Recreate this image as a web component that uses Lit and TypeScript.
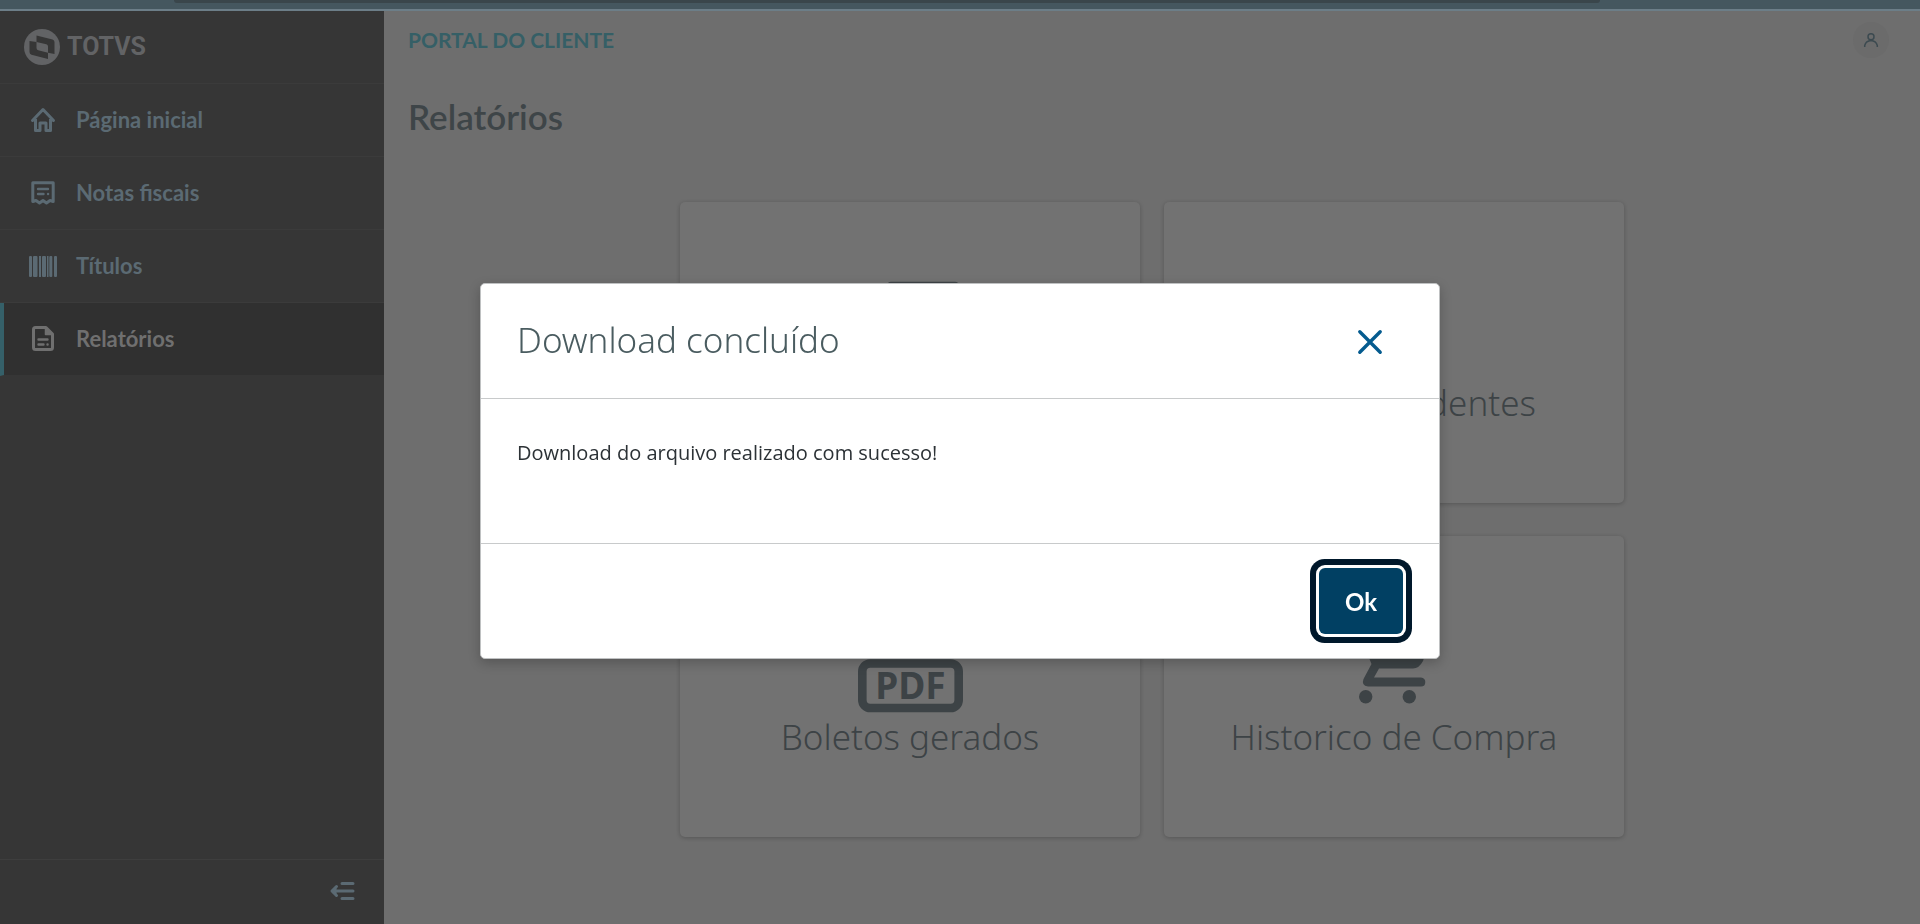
import { LitElement, html, css, svg } from "lit";
import { customElement, state } from "lit/decorators.js";
import { classMap } from "lit/directives/class-map.js";

const icons = {
  home: svg`<g fill="none" stroke="currentColor" stroke-width="3" stroke-linejoin="round" stroke-linecap="round">
    <path d="M4.5 15.5 L15 4.5 L25.500 15.500 M7.500 14 V25.500 H12 V18 H18 V25.500 H22.500 V14"/></g>`,
  invoice: svg`<g fill="none" stroke="currentColor" stroke-width="3" stroke-linejoin="round" stroke-linecap="round">
    <path d="M4.800 4.800 H25.200 V23.500 L22 22.500 L18.500 25 L15 22.500 L11.500 25 L8 22.500 L4.800 23.500 Z"/>
    <path stroke-width="2.400" d="M10 11 H20 M10 16 H15.500 M20 16 h.1"/></g>`,
  barcode: svg`<g fill="currentColor">
    <rect x="1" y="5" width="3" height="21" rx="1"/><rect x="5" y="5" width="4.500" height="21" rx="1"/>
    <rect x="11" y="5" width="2" height="21"/><rect x="14" y="5" width="4" height="21" rx="1"/>
    <rect x="19" y="5" width="1.500" height="21"/><rect x="21.300" y="5" width="3" height="21" rx="1"/>
    <rect x="26" y="5" width="3" height="21" rx="1"/></g>`,
  document: svg`<g fill="none" stroke="currentColor" stroke-width="3" stroke-linejoin="round" stroke-linecap="round">
    <path d="M7.500 3.500 H18 L24.500 10 V23.500 Q24.500 25.500 22.500 25.500 H7.500 Q5.500 25.500 5.500 23.500 V5.500 Q5.500 3.500 7.500 3.500 Z"/>
    <path fill="currentColor" stroke-width="1.500" d="M17.500 4 V10.500 H24 Z"/>
    <path stroke-width="2.400" d="M10.500 15.500 H19.500 M10.500 20.500 H15.500 M19.500 20.500 h.1"/></g>`,
};

const cardIcons = {
  report: svg`<path fill="none" stroke="currentColor" stroke-width="9" stroke-linejoin="round" d="M46 36.200 H110 V120 H25 V56 Z"/>`,
  list: svg`<path fill="none" stroke="currentColor" stroke-width="9" stroke-linecap="round" d="M28 50 H102 M28 75 H102 M28 100 H80"/>`,
  pdf: svg`<path fill="none" stroke="currentColor" stroke-width="9" stroke-linejoin="round" d="M28 74 V12 H78 L102 36 V74"/>
    <rect x="17.300" y="79.500" width="96.400" height="44.500" rx="8" fill="none" stroke="currentColor" stroke-width="8.600"/>
    <text class="pdf" x="65.500" y="115" text-anchor="middle">PDF</text>`,
  cart: svg`<g fill="currentColor"><circle cx="36.700" cy="112.800" r="6.700"/><circle cx="80.300" cy="112.800" r="6.700"/>
    <path d="M22 18 H34 L40 32 H104 Q109 32 107 38 L94 77 Q90 84.500 84 84.500 H50 L45 93.500 H92 Q96.300 94 96.300 98 Q96.300 102.500 92 102.500 H39 Q32 101.500 34.500 95 L42.500 80 L22 28 Z"/></g>`,
};

@customElement("app-root")
export class AppRoot extends LitElement {
  @state() private open = true;

  private menu = [
    { label: "Página inicial", icon: icons.home },
    { label: "Notas fiscais", icon: icons.invoice },
    { label: "Títulos", icon: icons.barcode },
    { label: "Relatórios", icon: icons.document, active: true },
  ];

  private cards = [
    { label: "Notas fiscais", icon: cardIcons.report },
    { label: "Títulos pendentes", icon: cardIcons.list },
    { label: "Boletos gerados", icon: cardIcons.pdf },
    { label: "Historico de Compra", icon: cardIcons.cart },
  ];

  static styles = css`
    :host { display: flex; flex-direction: column; min-height: 100vh; background: #6e6e6e; color: #3c4245;
      font-family: Lato, "Open Sans", sans-serif; }
    * { box-sizing: border-box; }
    h1, h2, p { margin: 0; }
    button { border: 0; padding: 0; background: none; font-family: inherit; cursor: pointer; }
    svg { display: block; flex: none; }
    .strip { height: 11px; background: #45575f; border-bottom: 2px solid #6c7e88; padding: 0 320px 0 174px; }
    .address { height: 3px; background: #3a464b; border-radius: 0 0 12px 12px; }
    .shell { flex: 1; display: flex; }
    .sidebar { width: 20%; min-width: 280px; background: #363636; display: flex; flex-direction: column; color: #5b6a73; }
    .brand { height: 73px; border-bottom: 1px solid #3b3b3b; padding-left: 24px; display: flex; align-items: center;
      gap: 7px; color: #626365; font: 700 25px/36px Roboto, sans-serif; }
    .item { height: 73px; border-bottom: 1px solid #3b3b3b; padding: 0 0 1px 28px; display: flex; align-items: center;
      gap: 18px; color: inherit; text-decoration: none; font-size: 22px; line-height: 28px; font-weight: 700; }
    .item.active { background: #303030; color: #6f6f6f; border-left: 4px solid #356069; border-bottom-color: #363636; padding-left: 24px; }
    .fold { margin-top: auto; height: 65px; border-top: 1px solid #3e3e3e; display: flex; align-items: center;
      justify-content: flex-end; padding-right: 28px; color: #5b6a73; }
    .fold button { color: inherit; }
    .content { flex: 1; padding: 0 24px; display: flex; flex-direction: column; }
    .top { height: 58px; display: flex; align-items: center; justify-content: space-between; padding-right: 7px; }
    .portal { font-size: 21px; line-height: 28px; font-weight: 700; color: #355f66; }
    .avatar { width: 36px; height: 36px; border-radius: 50%; background: #6b6b6b; display: grid; place-items: center; color: #3c4a50; }
    .title { margin-top: 23px; font-size: 35px; line-height: 48px; font-weight: 600; color: #3e4548; }
    .cards { width: 100%; max-width: 944px; margin: 62px auto 0; display: grid; grid-template-columns: 1fr 1fr; gap: 33px 24px; }
    .card { height: 301px; padding-top: 48px; background: #727272; border-radius: 5px; box-shadow: 0 1px 4px rgba(0, 0, 0, 0.22);
      display: flex; flex-direction: column; align-items: center; color: #3d4346;
      font: 300 35px/46px "Noto Sans", sans-serif; text-align: center; }
    .pdf { font: 700 37px "Noto Sans", sans-serif; fill: currentColor; }
    .overlay { position: fixed; inset: 0; padding-top: 18px; display: flex; align-items: center; justify-content: center; }
    .modal { position: static; width: 50%; min-width: 320px; margin: 0; padding: 0; background: #fff; border: 1px solid #bfc1c2;
      border-radius: 5px; box-shadow: 0 4px 12px rgba(0, 0, 0, 0.22); color: #2c3236; }
    .head { height: 115px; border-bottom: 1px solid #c8cacb; padding: 2px 56px 0 36px; display: flex; align-items: center;
      justify-content: space-between; }
    .head h2 { padding-bottom: 4px; font: 300 35px/48px "Noto Sans", sans-serif; color: #4a5c60; }
    .close { color: #045b8f; }
    .message { min-height: 144px; padding: 36px; font: 400 20px/36px "Open Sans", sans-serif; }
    .foot { height: 115px; border-top: 1px solid #c8cacb; padding: 0 36px; display: flex; align-items: center; justify-content: flex-end; }
    .ok { width: 84px; height: 66px; padding-top: 2px; border-radius: 6px; background: #014063; color: #fff; font-size: 24px; line-height: 32px;
      font-weight: 700; outline: none; box-shadow: 0 0 0 3px #fff, 0 0 0 9px #00182b; }
  `;

  private close() { this.open = false; }

  render() {
    return html`
      <div class="strip"><div class="address"></div></div>
      <div class="shell">
        <nav class="sidebar" aria-label="Menu">
          <div class="brand">
            <svg width="36" height="36" viewBox="0 0 36 36" aria-hidden="true">
              <circle cx="18" cy="18" r="18" fill="currentColor"/>
              <path fill="#363636" d="M12.500 6.500 L28.500 10.500 Q30.500 11.200 30.500 13 V25 L24 23.800 V17.500 Q24 15.800 22.300 15.300 L12.500 13 Z"/>
              <path fill="#363636" d="M5.500 12 L12.500 13 V19 Q12.500 20.700 14.200 21.200 L24 23.800 V30 L7.500 25.800 Q5.500 25 5.500 23 Z"/>
            </svg>
            <span>TOTVS</span>
          </div>
          ${this.menu.map(
            (m) => html`<a href="#" class=${classMap({ item: true, active: !!m.active })}>
              <svg width="30" height="30" viewBox="0 0 30 30" aria-hidden="true">${m.icon}</svg><span>${m.label}</span></a>`
          )}
          <div class="fold">
            <button aria-label="Recolher menu">
              <svg width="28" height="24" viewBox="0 0 28 24" aria-hidden="true">
                <g fill="none" stroke="currentColor" stroke-width="3" stroke-linecap="round" stroke-linejoin="round">
                  <path d="M14 3.500 H25 M5 11 H25 M14 18.500 H25 M8.500 6.500 L4 11 L8.500 15.500"/></g>
                <path fill="currentColor" d="M8.500 6 V16 L3 11 Z"/>
              </svg>
            </button>
          </div>
        </nav>
        <main class="content">
          <header class="top">
            <span class="portal">PORTAL DO CLIENTE</span>
            <button class="avatar" aria-label="Perfil">
              <svg width="16" height="16" viewBox="0 0 16 16" aria-hidden="true">
                <g fill="none" stroke="currentColor" stroke-width="1.500"><circle cx="8" cy="4.800" r="3"/>
                  <path d="M1.700 15 V13.500 Q3 8.800 8 8.500 Q13 8.800 14.300 13.500 V15"/></g>
              </svg>
            </button>
          </header>
          <h1 class="title">Relatórios</h1>
          <section class="cards">
            ${this.cards.map(
              (c) => html`<div class="card">
                <svg width="130" height="130" viewBox="0 0 130 130" aria-hidden="true">${c.icon}</svg>
                <span>${c.label}</span></div>`
            )}
          </section>
        </main>
      </div>
      ${this.open
        ? html`<div class="overlay">
            <dialog open class="modal" aria-labelledby="modal-title">
              <div class="head">
                <h2 id="modal-title">Download concluído</h2>
                <button class="close" aria-label="Fechar" @click=${this.close}>
                  <svg width="26" height="26" viewBox="0 0 26 26" aria-hidden="true">
                    <path fill="none" stroke="currentColor" stroke-width="3.400" stroke-linecap="round" d="M2.800 2.800 L23.200 23.200 M23.200 2.800 L2.800 23.200"/>
                  </svg>
                </button>
              </div>
              <p class="message">Download do arquivo realizado com sucesso!</p>
              <div class="foot"><button class="ok" @click=${this.close}>Ok</button></div>
            </dialog>
          </div>`
        : null}
    `;
  }
}
